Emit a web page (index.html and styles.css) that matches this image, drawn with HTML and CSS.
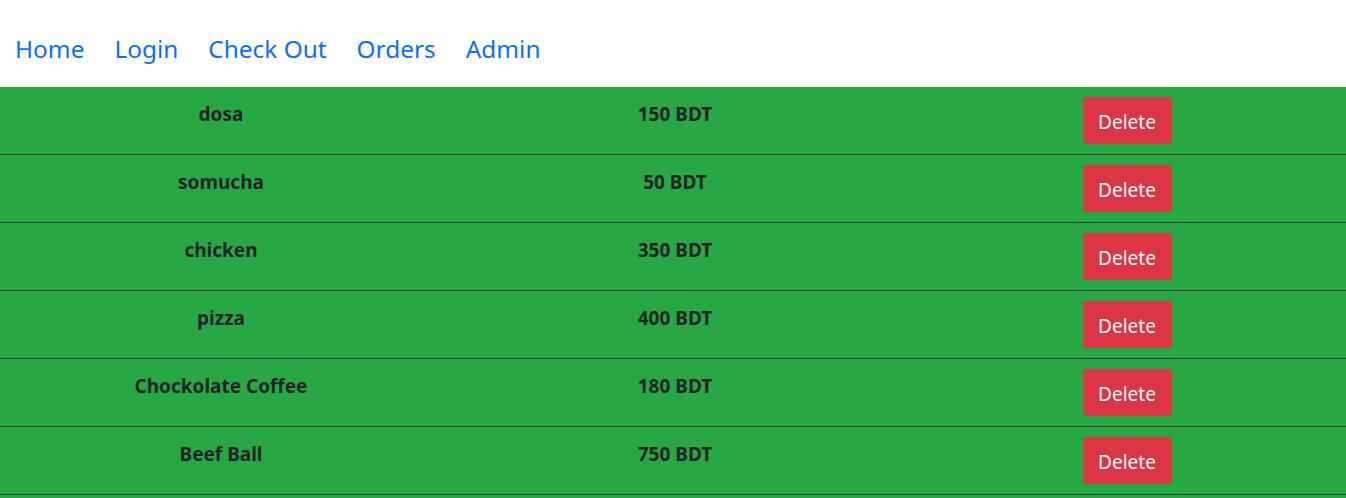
FILE: index.html
```html
<!DOCTYPE html>
<html lang="en">
<head>
<meta charset="utf-8">
<title>Admin</title>
<link rel="stylesheet" href="styles.css">
</head>
<body>
<nav class="nav">
  <a class="nav-link" href="#">Home</a>
  <a class="nav-link" href="#">Login</a>
  <a class="nav-link" href="#">Check Out</a>
  <a class="nav-link" href="#">Orders</a>
  <a class="nav-link" href="#">Admin</a>
</nav>
<main class="items">
  <table class="item-table">
    <colgroup>
      <col class="col-name">
      <col class="col-price">
      <col class="col-action">
    </colgroup>
    <tbody>
      <tr><th>dosa</th><th>150 BDT</th><td><button class="btn-delete">Delete</button></td></tr>
      <tr><th>somucha</th><th>50 BDT</th><td><button class="btn-delete">Delete</button></td></tr>
      <tr><th>chicken</th><th>350 BDT</th><td><button class="btn-delete">Delete</button></td></tr>
      <tr><th>pizza</th><th>400 BDT</th><td><button class="btn-delete">Delete</button></td></tr>
      <tr><th>Chockolate Coffee</th><th>180 BDT</th><td><button class="btn-delete">Delete</button></td></tr>
      <tr><th>Beef Ball</th><th>750 BDT</th><td><button class="btn-delete">Delete</button></td></tr>
    </tbody>
  </table>
</main>
</body>
</html>
```
FILE: styles.css
```css
* { box-sizing: border-box; }
html, body {
  margin: 0;
  padding: 0;
}
body {
  font-family: "Segoe UI", "Noto Sans", "Liberation Sans", sans-serif;
  color: #212529;
  background: #fff;
}
.nav {
  display: flex;
  padding: 31px 0 20px;
  height: 87px;
}
.nav-link {
  display: block;
  padding: 0 15px;
  font-size: 24.4px;
  line-height: 36px;
  color: #0d6efd;
  text-decoration: none;
}
.items {
  background: #28a745;
  min-height: 420px;
}
.item-table {
  width: 100%;
  border-collapse: collapse;
  table-layout: fixed;
}
.col-name { width: 442px; }
.col-price { width: 466px; }
.col-action { width: 438px; }
.item-table tr {
  border-bottom: 1px solid #373b3e;
}
.item-table th,
.item-table td {
  text-align: center;
  vertical-align: top;
  padding: 0;
}
.item-table th {
  padding-top: 15px;
  font-size: 19px;
  line-height: 24px;
  font-weight: 700;
  color: #212529;
}
.item-table td {
  padding: 10px 0;
}
.btn-delete {
  display: inline-block;
  height: 47px;
  width: 89px;
  padding: 4px 0 0;
  border: 0;
  border-radius: 4px;
  background: #dc3545;
  color: #fff;
  font-family: inherit;
  font-size: 19px;
  line-height: 43px;
  cursor: pointer;
}
```
